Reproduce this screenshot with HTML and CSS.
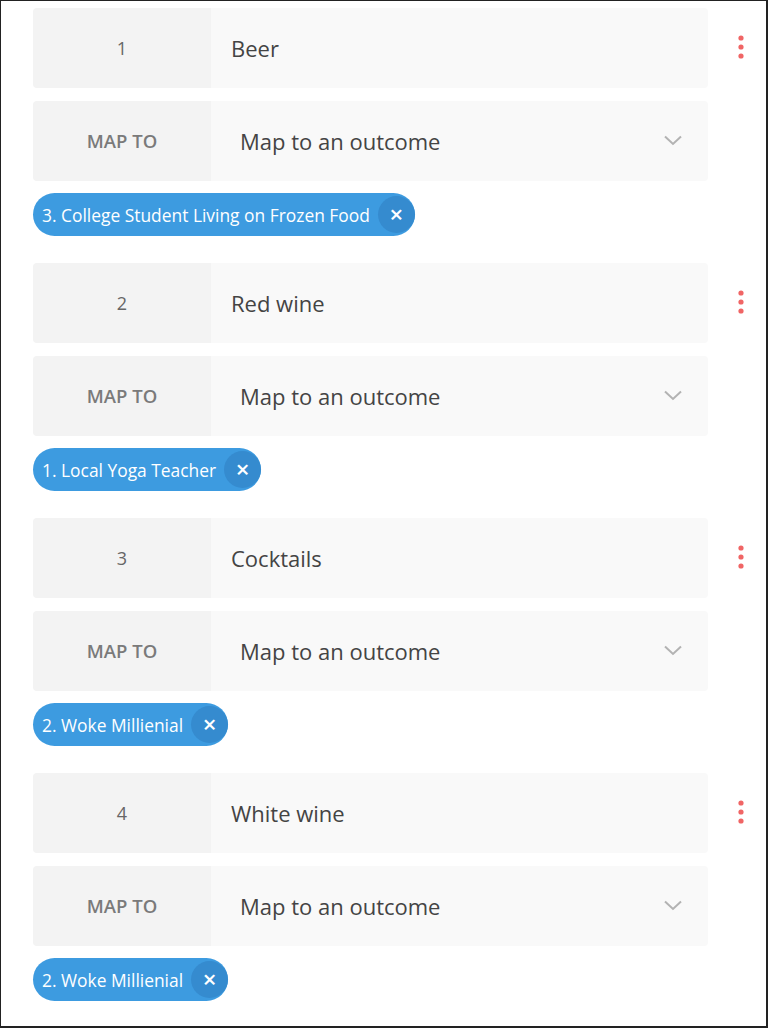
FILE: index.html
```html
<!DOCTYPE html>
<html>
<head>
<meta charset="utf-8">
<link rel="stylesheet" href="styles.css">
</head>
<body>
<div class="frame">
  <div class="group">
    <div class="row">
      <div class="card">
        <div class="label">1</div>
        <div class="value">Beer</div>
      </div>
      <div class="menu"><svg width="6" height="24" viewBox="0 0 6 24"><circle cx="3" cy="3" r="2.6"/><circle cx="3" cy="12" r="2.6"/><circle cx="3" cy="21" r="2.6"/></svg></div>
    </div>
    <div class="row">
      <div class="card">
        <div class="label map">MAP TO</div>
        <div class="select"><span>Map to an outcome</span><svg class="chev" width="18" height="11" viewBox="0 0 18 11"><path d="M1 1.5 L9 9 L17 1.5"/></svg></div>
      </div>
    </div>
    <div class="chips"><span class="chip"><span class="chip-text">3. College Student Living on Frozen Food</span><span class="chip-x">×</span></span></div>
  </div>

  <div class="group">
    <div class="row">
      <div class="card">
        <div class="label">2</div>
        <div class="value">Red wine</div>
      </div>
      <div class="menu"><svg width="6" height="24" viewBox="0 0 6 24"><circle cx="3" cy="3" r="2.6"/><circle cx="3" cy="12" r="2.6"/><circle cx="3" cy="21" r="2.6"/></svg></div>
    </div>
    <div class="row">
      <div class="card">
        <div class="label map">MAP TO</div>
        <div class="select"><span>Map to an outcome</span><svg class="chev" width="18" height="11" viewBox="0 0 18 11"><path d="M1 1.5 L9 9 L17 1.5"/></svg></div>
      </div>
    </div>
    <div class="chips"><span class="chip"><span class="chip-text">1. Local Yoga Teacher</span><span class="chip-x">×</span></span></div>
  </div>

  <div class="group">
    <div class="row">
      <div class="card">
        <div class="label">3</div>
        <div class="value">Cocktails</div>
      </div>
      <div class="menu"><svg width="6" height="24" viewBox="0 0 6 24"><circle cx="3" cy="3" r="2.6"/><circle cx="3" cy="12" r="2.6"/><circle cx="3" cy="21" r="2.6"/></svg></div>
    </div>
    <div class="row">
      <div class="card">
        <div class="label map">MAP TO</div>
        <div class="select"><span>Map to an outcome</span><svg class="chev" width="18" height="11" viewBox="0 0 18 11"><path d="M1 1.5 L9 9 L17 1.5"/></svg></div>
      </div>
    </div>
    <div class="chips"><span class="chip"><span class="chip-text">2. Woke Millienial</span><span class="chip-x">×</span></span></div>
  </div>

  <div class="group">
    <div class="row">
      <div class="card">
        <div class="label">4</div>
        <div class="value">White wine</div>
      </div>
      <div class="menu"><svg width="6" height="24" viewBox="0 0 6 24"><circle cx="3" cy="3" r="2.6"/><circle cx="3" cy="12" r="2.6"/><circle cx="3" cy="21" r="2.6"/></svg></div>
    </div>
    <div class="row">
      <div class="card">
        <div class="label map">MAP TO</div>
        <div class="select"><span>Map to an outcome</span><svg class="chev" width="18" height="11" viewBox="0 0 18 11"><path d="M1 1.5 L9 9 L17 1.5"/></svg></div>
      </div>
    </div>
    <div class="chips"><span class="chip"><span class="chip-text">2. Woke Millienial</span><span class="chip-x">×</span></span></div>
  </div>
</div>
</body>
</html>
```

FILE: styles.css
```css
* { box-sizing: border-box; }
html, body { margin: 0; padding: 0; background: #fff; }
body { font-family: "Open Sans", "Noto Sans", sans-serif; }
.frame {
  width: 768px;
  height: 1028px;
  border-style: solid;
  border-color: #222;
  border-width: 1px 2px 2px 1px;
  padding: 7px 0 0 32px;
  display: flex;
  flex-direction: column;
  gap: 27px;
  overflow: hidden;
}
.group { display: flex; flex-direction: column; }
.row { display: flex; align-items: flex-start; }
.row + .row { margin-top: 13px; }
.card {
  flex: 0 0 675px;
  width: 675px;
  height: 80px;
  display: flex;
  border-radius: 4px;
  overflow: hidden;
}
.label {
  width: 178px;
  background: #f3f3f3;
  color: #666;
  font-size: 18px;
  display: flex;
  align-items: center;
  justify-content: center;
  padding-bottom: 1px;
}
.label.map { font-size: 18.5px; color: #7a7a7a; font-weight: 600; }
.value {
  flex: 1;
  background: #f9f9f9;
  color: #444;
  font-size: 22px;
  display: flex;
  align-items: center;
  padding-left: 20px;
  padding-bottom: 1px;
}
.select {
  flex: 1;
  background: #f9f9f9;
  color: #444;
  font-size: 22px;
  display: flex;
  align-items: center;
  justify-content: space-between;
  padding: 0 26px 1px 29px;
}
.chev path { fill: none; stroke: #b3b3b3; stroke-width: 2; }
.menu {
  flex: 0 0 auto;
  margin-left: 30px;
  padding-top: 27px;
  display: flex;
}
.menu svg { fill: #f06565; }
.chips { margin-top: 12px; display: flex; }
.chip {
  display: inline-flex;
  align-items: center;
  height: 43px;
  border-radius: 22px;
  background: #3d9be0;
  color: #fff;
  padding: 3px 0 3px 9px;
  gap: 8px;
}
.chip-text { font-size: 17.4px; }
.chip-x {
  width: 37px;
  height: 37px;
  border-radius: 50%;
  background: #358bcf;
  display: flex;
  align-items: center;
  justify-content: center;
  font-size: 24px;
  font-weight: 600;
  line-height: 1;
  padding-bottom: 2px;
}
```
